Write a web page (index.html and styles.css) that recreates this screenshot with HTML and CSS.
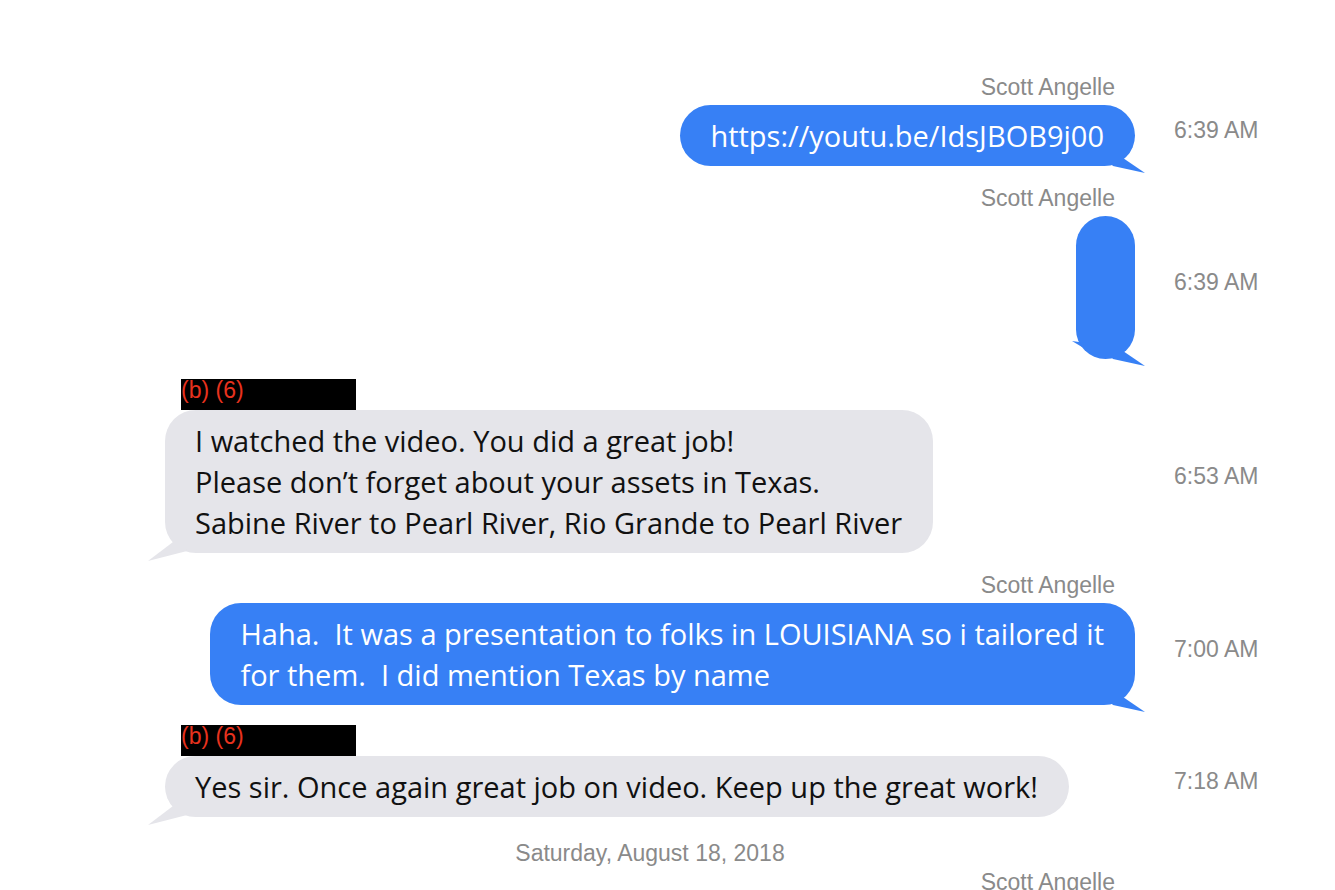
FILE: index.html
```html
<!DOCTYPE html>
<html>
<head>
<meta charset="utf-8">
<link rel="stylesheet" href="styles.css">
</head>
<body>
<div class="chat">
  <div class="msg out">
    <div class="sender">Scott Angelle</div>
    <div class="line">
      <div class="lane">
        <div class="bubble">https://youtu.be/IdsJBOB9j00<svg class="tail" width="50" height="20" viewBox="0 0 50 20"><polygon points="16,11 28,5 50,20 18,13"/></svg></div>
      </div>
      <div class="time">6:39 AM</div>
    </div>
  </div>

  <div class="msg out">
    <div class="sender">Scott Angelle</div>
    <div class="line">
      <div class="lane">
        <div class="bubble empty"><svg class="spike" width="20" height="12" viewBox="0 0 20 12"><polygon points="0,0 14,2 18,8 10,6"/></svg><svg class="tail" width="50" height="20" viewBox="0 0 50 20"><polygon points="16,11 28,5 50,20 18,13"/></svg></div>
      </div>
      <div class="time">6:39 AM</div>
    </div>
  </div>

  <div class="msg in">
    <div class="redact">(b) (6)</div>
    <div class="line">
      <div class="lane">
        <div class="bubble">I watched the video. You did a great job!<br>Please don’t forget about your assets in Texas.<br>Sabine River to Pearl River, Rio Grande to Pearl River<svg class="tail" width="50" height="25" viewBox="0 0 50 25"><polygon points="28,4 40,8 42,13 3,23"/></svg></div>
      </div>
      <div class="time">6:53 AM</div>
    </div>
  </div>

  <div class="msg out">
    <div class="sender">Scott Angelle</div>
    <div class="line">
      <div class="lane">
        <div class="bubble">Haha.&nbsp; It was a presentation to folks in LOUISIANA so i tailored it<br>for them.&nbsp; I did mention Texas by name<svg class="tail" width="50" height="20" viewBox="0 0 50 20"><polygon points="16,11 28,5 50,20 18,13"/></svg></div>
      </div>
      <div class="time">7:00 AM</div>
    </div>
  </div>

  <div class="msg in">
    <div class="redact">(b) (6)</div>
    <div class="line">
      <div class="lane">
        <div class="bubble">Yes sir. Once again great job on video. Keep up the great work!<svg class="tail" width="50" height="25" viewBox="0 0 50 25"><polygon points="28,4 40,8 42,13 3,23"/></svg></div>
      </div>
      <div class="time">7:18 AM</div>
    </div>
  </div>

  <div class="date">Saturday, August 18, 2018</div>

  <div class="msg out">
    <div class="sender">Scott Angelle</div>
  </div>
</div>
</body>
</html>
```

FILE: styles.css
```css
html, body {
  margin: 0;
  padding: 0;
  background: #ffffff;
  overflow: hidden;
}

.chat {
  padding-top: 55px;
  height: 890px;
  box-sizing: border-box;
  overflow: hidden;
  font-family: "Liberation Sans", Arial, sans-serif;
}

.msg {
  margin-top: 20px;
  padding-left: 165px;
}

.sender {
  width: 950px;
  text-align: right;
  font-size: 23px;
  line-height: 25px;
  color: #8a8a8a;
  margin-bottom: 5px;
}

.redact {
  margin-left: 16px;
  width: 175px;
  height: 31px;
  background: #000000;
  color: #e8321e;
  font-size: 23px;
  line-height: 22px;
}

.line {
  display: flex;
  align-items: center;
}

.lane {
  width: 970px;
  display: flex;
}

.out .lane {
  justify-content: flex-end;
}

.in .lane {
  justify-content: flex-start;
}

.bubble {
  position: relative;
  padding: 10px 31px 10px 30px;
  border-radius: 31px;
  font-family: "Open Sans", "Noto Sans", sans-serif;
  font-size: 29px;
  line-height: 41px;
  white-space: nowrap;
}

.out .bubble {
  background: #3780f5;
  color: #ffffff;
}

.in .bubble {
  background: #e5e5ea;
  color: #111111;
}

.bubble.empty {
  width: 59px;
  height: 143px;
  padding: 0;
  box-sizing: border-box;
  border-radius: 30px;
}

.tail {
  position: absolute;
  overflow: visible;
}

.out .tail {
  right: -10px;
  bottom: -7px;
  fill: #3780f5;
}

.in .tail {
  left: -20px;
  bottom: -10px;
  fill: #e5e5ea;
}

.spike {
  position: absolute;
  left: -4px;
  bottom: 6px;
  fill: #3780f5;
}

.time {
  margin-left: 39px;
  font-size: 23px;
  line-height: 25px;
  color: #8a8a8a;
  padding-bottom: 10px;
}

.date {
  width: 970px;
  margin-left: 165px;
  margin-top: 24px;
  text-align: center;
  font-size: 23px;
  line-height: 25px;
  color: #8a8a8a;
}

.date + .msg {
  margin-top: 4px;
}
```
